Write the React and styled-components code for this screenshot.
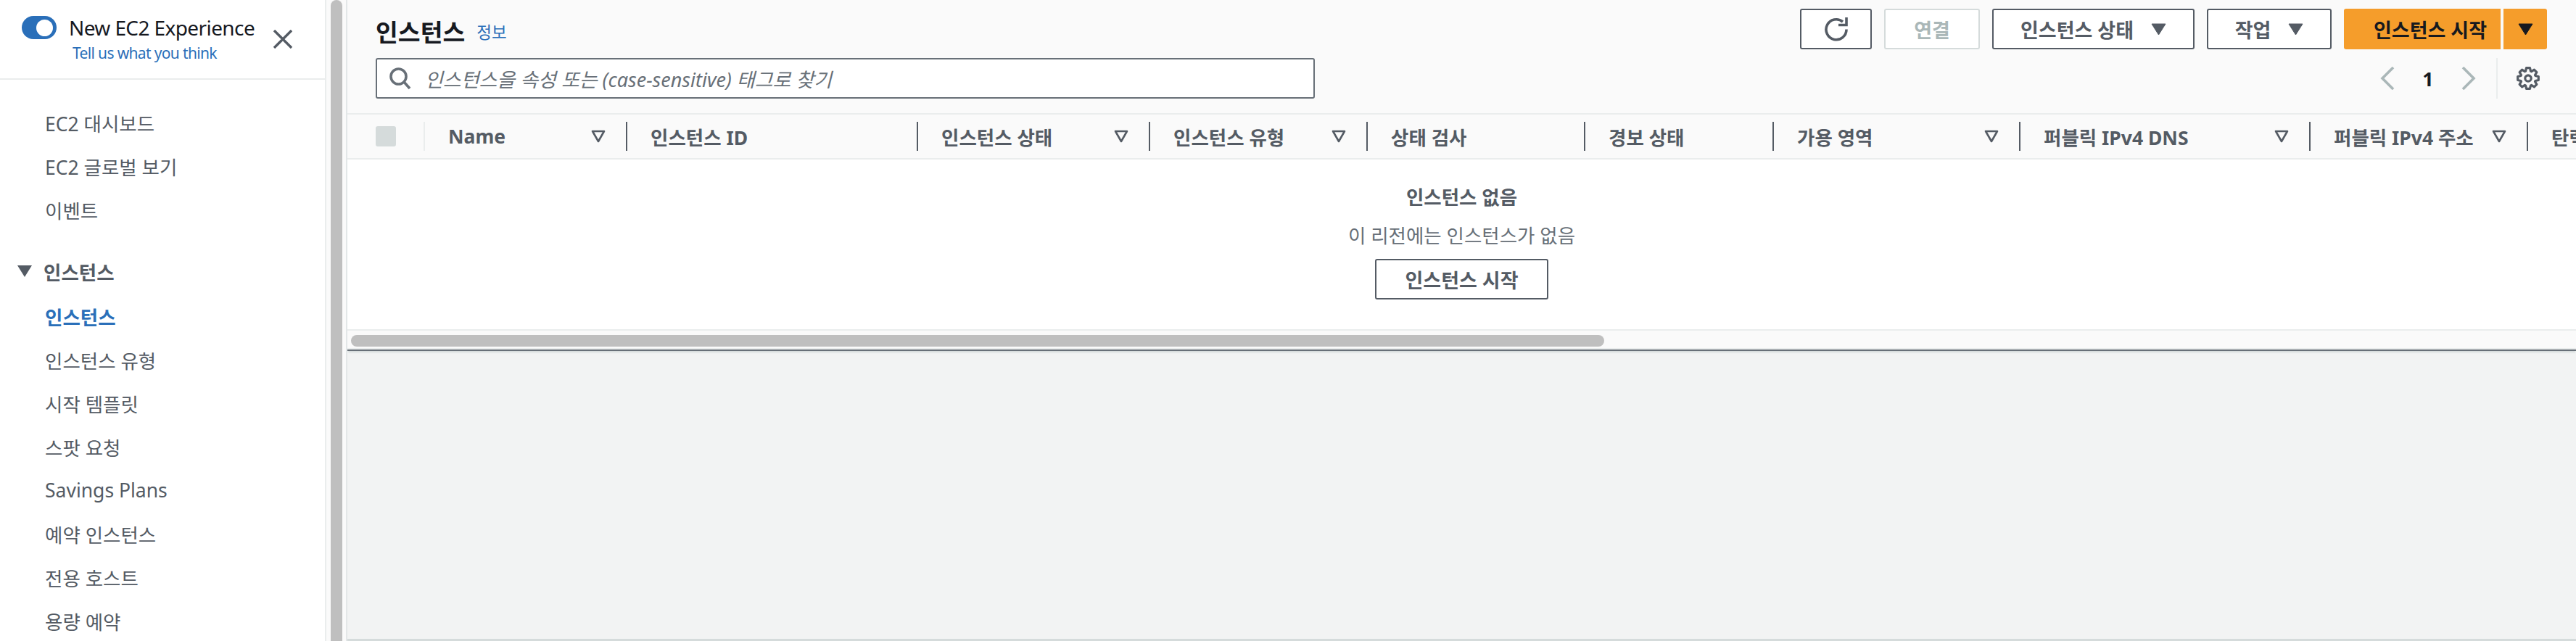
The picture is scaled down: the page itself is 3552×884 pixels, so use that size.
import React from 'react'
import styled, { createGlobalStyle } from 'styled-components'

const FONT = `"Noto Sans", "Noto Sans CJK KR", sans-serif`
const GREY = '#545b64'
const BLUE = '#2a6fb9'

const GlobalStyle = createGlobalStyle`
  html, body {
    margin: 0;
    padding: 0;
    background: #fff;
  }
  * {
    box-sizing: border-box;
  }
  body {
    font-family: ${FONT};
    color: ${GREY};
  }
`

const Page = styled.div`
  display: flex;
  width: 3552px;
  height: 884px;
  overflow: hidden;
`

const Sidebar = styled.nav`
  width: 450px;
  flex: none;
  background: #fff;
  border-right: 2px solid #eaeded;
`

const SidebarHead = styled.div`
  position: relative;
  height: 110px;
  padding: 20px 0 0 30px;
  border-bottom: 2px solid #eaeded;
`

const ToggleRow = styled.div`
  display: flex;
  align-items: center;
  gap: 17px;
  font-size: 28px;
  line-height: 36px;
  letter-spacing: -0.6px;
  color: #16191f;
`

const Toggle = styled.span`
  position: relative;
  width: 48px;
  height: 32px;
  border-radius: 16px;
  background: ${BLUE};

  &::after {
    content: '';
    position: absolute;
    top: 5px;
    right: 5px;
    width: 23px;
    height: 23px;
    border-radius: 50%;
    background: #fff;
  }
`

const Feedback = styled.a`
  display: block;
  margin: 2px 0 0 70px;
  font-size: 21px;
  line-height: 30px;
  letter-spacing: -0.65px;
  color: ${BLUE};
`

const CloseButton = styled.svg`
  position: absolute;
  top: 41px;
  left: 377px;
`

const NavList = styled.ul`
  list-style: none;
  margin: 0;
  padding: 29px 0 0;
`

const NavItem = styled.li`
  height: 60px;
  padding-left: ${(p) => (p.$section ? '60px' : '62px')};
  display: flex;
  align-items: center;
  position: relative;
  font-size: 26.5px;
  font-weight: ${(p) => (p.$active || p.$section ? 700 : 400)};
  color: ${(p) => (p.$active ? BLUE : GREY)};
  margin-top: ${(p) => (p.$section ? '25px' : '0')};
  margin-bottom: ${(p) => (p.$section ? '2px' : '0')};
`

const SectionArrow = styled.svg`
  position: absolute;
  left: 24px;
  top: 22px;
`

const Rail = styled.div`
  width: 29px;
  flex: none;
  padding-left: 6px;
  background: #fafafa;
  border-right: 2px solid #e4e7e8;
`

const RailThumb = styled.div`
  width: 16px;
  height: 100%;
  border-radius: 8px 8px 0 0;
  background: #bfbfbf;
`

const Main = styled.main`
  flex: 1;
  min-width: 0;
  display: flex;
  flex-direction: column;
`

const Panel = styled.section`
  flex: none;
  height: 484px;
  display: flex;
  flex-direction: column;
  background: #fafafa;
  border-bottom: 2px solid #687078;
  box-shadow: 0 3px 2px -1px #d5dbdb;
  position: relative;
`

const HeaderArea = styled.header`
  height: 156px;
  padding: 12px 40px 0 39px;
  flex: none;
`

const TitleRow = styled.div`
  display: flex;
  justify-content: space-between;
  align-items: flex-start;
  height: 68px;
`

const Title = styled.div`
  display: flex;
  align-items: center;
  gap: 16px;
  height: 60px;
`

const Heading = styled.h1`
  margin: 0;
  font-size: 33.5px;
  font-weight: 700;
  color: #16191f;
`

const InfoLink = styled.a`
  font-size: 22.5px;
  color: ${BLUE};
  margin-top: 2px;
`

const ButtonRow = styled.div`
  display: flex;
  gap: 17px;
`

const Button = styled.button`
  height: 56px;
  width: ${(p) => p.$width}px;
  padding: 0;
  display: flex;
  align-items: center;
  justify-content: center;
  gap: ${(p) => p.$gap || 0}px;
  border: 2px solid ${(p) => (p.$disabled ? '#d5dbdb' : GREY)};
  border-radius: 3px;
  background: #fff;
  font-family: ${FONT};
  font-size: 27px;
  font-weight: 700;
  color: ${(p) => (p.$disabled ? '#aab7b8' : GREY)};
`

const SplitButton = styled.div`
  display: flex;
  gap: 4px;
`

const OrangeButton = styled(Button)`
  border: none;
  padding-left: ${(p) => (p.$caret ? '0' : '22px')};
  background: #f59d2b;
  color: #16191f;
  border-radius: ${(p) => (p.$caret ? '0 3px 3px 0' : '3px 0 0 3px')};
`

const SearchRow = styled.div`
  display: flex;
  justify-content: space-between;
  align-items: center;
`

const SearchBox = styled.div`
  width: 1295px;
  height: 56px;
  display: flex;
  align-items: center;
  gap: 18px;
  padding-left: 16px;
  background: #fff;
  border: 2px solid #687078;
  border-radius: 3px;
  font-size: 27px;
  font-style: italic;
  color: #687078;
`

const Pager = styled.div`
  display: flex;
  align-items: center;
  height: 56px;
  padding-right: 10px;
`

const PageNumber = styled.span`
  width: 92px;
  text-align: center;
  font-size: 27px;
  font-weight: 700;
  color: #16191f;
`

const PagerDivider = styled.span`
  width: 2px;
  height: 56px;
  margin: 0 26px 0 28px;
  background: #eaeded;
`

const TableHead = styled.div`
  height: 64px;
  flex: none;
  display: flex;
  align-items: center;
  overflow: hidden;
  background: #fafafa;
  border-top: 2px solid #eaeded;
  border-bottom: 2px solid #eaeded;
`

const CheckCell = styled.div`
  flex: none;
  width: 107px;
  height: 40px;
  display: flex;
  align-items: center;
  padding-left: 39px;
  border-right: 2px solid #eaeded;
`

const CheckBox = styled.span`
  width: 28px;
  height: 28px;
  border-radius: 3px;
  background: #d5dbdb;
`

const HeadCell = styled.div`
  flex: none;
  width: ${(p) => p.$width}px;
  height: 40px;
  padding: 0 ${(p) => (p.$sortable ? '28px' : '0')} 0 32px;
  display: flex;
  align-items: center;
  justify-content: space-between;
  white-space: nowrap;
  border-right: 2px solid ${GREY};
  font-size: 26.5px;
  font-weight: 700;
  color: ${GREY};

  &:last-child {
    border-right: none;
  }
`

const EmptyState = styled.div`
  flex: 1;
  display: flex;
  flex-direction: column;
  align-items: center;
  background: #fff;
  padding-top: 32px;
`

const EmptyTitle = styled.div`
  font-size: 26.5px;
  line-height: 40px;
  font-weight: 700;
`

const EmptyText = styled.div`
  margin-top: 13px;
  font-size: 26.5px;
  line-height: 40px;
  color: #687078;
`

const EmptyAction = styled(Button)`
  margin-top: 12px;
`

const HScroll = styled.div`
  height: 28px;
  flex: none;
  padding: 6px 0 0 5px;
  background: #fafafa;
  border-top: 2px solid #eaeded;
  border-bottom: 2px solid #eaeded;
`

const HThumb = styled.div`
  width: 1728px;
  height: 16px;
  border-radius: 8px;
  background: #bfbfbf;
`

const LowerPane = styled.div`
  flex: 1;
  background: #f2f3f3;
  border-bottom: 3px solid #d5dbdb;
`

const FilterIcon = () => (
  <svg width="20" height="18" viewBox="0 0 20 18" fill="none" stroke={GREY} strokeWidth="2.6" strokeLinejoin="round">
    <path d="M2 2h16l-8 14z" />
  </svg>
)

const Caret = ({ color = GREY }) => (
  <svg width="21" height="17" viewBox="0 0 21 17" fill={color} stroke={color} strokeWidth="1" strokeLinejoin="round">
    <path d="M1 1h19l-9.500 15z" />
  </svg>
)

// eight tooth cog outline, centred in a 32 box
const cogPath = () => {
  const points = []
  for (let i = 0; i < 8; i++) {
    const mid = (i * Math.PI) / 4 - Math.PI / 2
    const parts = [
      [10.5, mid - 0.34],
      [14.5, mid - 0.17],
      [14.5, mid + 0.17],
      [10.5, mid + 0.34],
    ]
    parts.forEach(([r, a]) => points.push(`${(16 + r * Math.cos(a)).toFixed(2)} ${(16 + r * Math.sin(a)).toFixed(2)}`))
  }
  return `M${points.join('L')}z`
}

const columns = [
  { label: 'Name', width: 279, sortable: true },
  { label: '인스턴스 ID', width: 401 },
  { label: '인스턴스 상태', width: 320, sortable: true },
  { label: '인스턴스 유형', width: 300, sortable: true },
  { label: '상태 검사', width: 300 },
  { label: '경보 상태', width: 260 },
  { label: '가용 영역', width: 340, sortable: true },
  { label: '퍼블릭 IPv4 DNS', width: 400, sortable: true },
  { label: '퍼블릭 IPv4 주소', width: 300, sortable: true },
  { label: '탄력적 IP', width: 300 },
]

const navTop = ['EC2 대시보드', 'EC2 글로벌 보기', '이벤트']
const navInstances = ['인스턴스 유형', '시작 템플릿', '스팟 요청', 'Savings Plans', '예약 인스턴스', '전용 호스트', '용량 예약']

const App = () => (
  <Page>
    <GlobalStyle />
    <Sidebar>
      <SidebarHead>
        <ToggleRow>
          <Toggle />
          New EC2 Experience
        </ToggleRow>
        <Feedback>Tell us what you think</Feedback>
        <CloseButton width="26" height="26" viewBox="0 0 26 26" stroke={GREY} strokeWidth="3.4">
          <path d="M1 1l24 24M25 1L1 25" />
        </CloseButton>
      </SidebarHead>
      <NavList>
        {navTop.map((item) => (
          <NavItem key={item}>{item}</NavItem>
        ))}
        <NavItem $section>
          <SectionArrow width="20" height="16" viewBox="0 0 20 16" fill={GREY}>
            <path d="M0 0h20L10 16z" />
          </SectionArrow>
          인스턴스
        </NavItem>
        <NavItem $active>인스턴스</NavItem>
        {navInstances.map((item) => (
          <NavItem key={item}>{item}</NavItem>
        ))}
      </NavList>
    </Sidebar>
    <Rail>
      <RailThumb />
    </Rail>
    <Main>
      <Panel>
        <HeaderArea>
          <TitleRow>
            <Title>
              <Heading>인스턴스</Heading>
              <InfoLink>정보</InfoLink>
            </Title>
            <ButtonRow>
              <Button $width={99}>
                <svg width="34" height="34" viewBox="0 0 34 34" fill="none" stroke={GREY} strokeWidth="3.6">
                  <path d="M26 7A14 14 0 1 0 31 17.500" />
                  <path d="M31 1v10.500H20" />
                </svg>
              </Button>
              <Button $width={132} $disabled>
                연결
              </Button>
              <Button $width={279} $gap={24}>
                인스턴스 상태 <Caret />
              </Button>
              <Button $width={172} $gap={24}>
                작업 <Caret />
              </Button>
              <SplitButton>
                <OrangeButton $width={216}>인스턴스 시작</OrangeButton>
                <OrangeButton $width={60} $caret>
                  <Caret color="#16191f" />
                </OrangeButton>
              </SplitButton>
            </ButtonRow>
          </TitleRow>
          <SearchRow>
            <SearchBox>
              <svg width="32" height="32" viewBox="0 0 32 32" fill="none" stroke="#687078" strokeWidth="3.6">
                <circle cx="13.5" cy="13.5" r="10.5" />
                <path d="M21 21l8 9" />
              </svg>
              인스턴스을 속성 또는 (case-sensitive) 태그로 찾기
            </SearchBox>
            <Pager>
              <svg width="20" height="32" viewBox="0 0 20 32" fill="none" stroke="#aab7b8" strokeWidth="3.6">
                <path d="M18 1L3 16l15 15" />
              </svg>
              <PageNumber>1</PageNumber>
              <svg width="20" height="32" viewBox="0 0 20 32" fill="none" stroke="#aab7b8" strokeWidth="3.6">
                <path d="M2 1l15 15L2 31" />
              </svg>
              <PagerDivider />
              <svg width="32" height="32" viewBox="0 0 32 32" fill="none" stroke={GREY} strokeWidth="3.2" strokeLinejoin="round">
                <circle cx="16" cy="16" r="4.2" />
                <path d={cogPath()} />
              </svg>
            </Pager>
          </SearchRow>
        </HeaderArea>
        <TableHead>
          <CheckCell>
            <CheckBox />
          </CheckCell>
          {columns.map((col) => (
            <HeadCell key={col.label} $width={col.width} $sortable={col.sortable}>
              {col.label}
              {col.sortable && <FilterIcon />}
            </HeadCell>
          ))}
        </TableHead>
        <EmptyState>
          <EmptyTitle>인스턴스 없음</EmptyTitle>
          <EmptyText>이 리전에는 인스턴스가 없음</EmptyText>
          <EmptyAction $width={239}>인스턴스 시작</EmptyAction>
        </EmptyState>
        <HScroll>
          <HThumb />
        </HScroll>
      </Panel>
      <LowerPane />
    </Main>
  </Page>
)

export default App
